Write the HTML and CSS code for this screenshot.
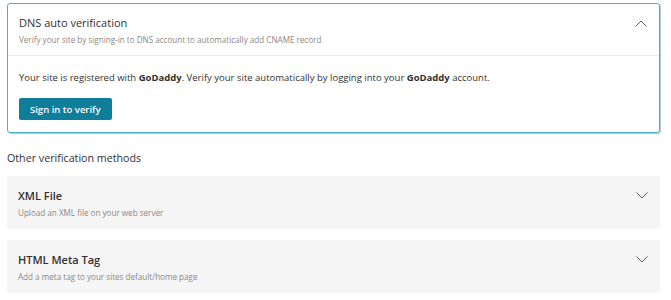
FILE: index.html
```html
<!DOCTYPE html>
<html lang="en">
<head>
  <meta charset="UTF-8" />
  <title>Site verification</title>
  <link rel="stylesheet" href="styles.css">
</head>
<body>
  <div class="page">
    <div class="panel panel-open">
      <div class="panel-head">
        <div>
          <div class="panel-title">DNS auto verification</div>
          <div class="panel-sub">Verify your site by signing-in to DNS account to automatically add CNAME record</div>
        </div>
        <svg class="chev" width="12" height="7" viewBox="0 0 12 7"><path d="M0.5 6.5 L6 1 L11.5 6.5" fill="none" stroke="#605e5c" stroke-width="1"/></svg>
      </div>
      <div class="panel-body">
        <p class="msg">Your site is registered with <b>GoDaddy</b>. Verify your site automatically by logging into your <b>GoDaddy</b> account.</p>
        <button class="btn">Sign in to verify</button>
      </div>
    </div>

    <div class="section-label">Other verification methods</div>

    <div class="panel panel-closed">
      <div class="panel-head">
        <div>
          <div class="panel-title strong">XML File</div>
          <div class="panel-sub">Upload an XML file on your web server</div>
        </div>
        <svg class="chev" width="12" height="7" viewBox="0 0 12 7"><path d="M0.5 0.5 L6 6 L11.5 0.5" fill="none" stroke="#605e5c" stroke-width="1"/></svg>
      </div>
    </div>

    <div class="panel panel-closed">
      <div class="panel-head">
        <div>
          <div class="panel-title strong">HTML Meta Tag</div>
          <div class="panel-sub">Add a meta tag to your sites default/home page</div>
        </div>
        <svg class="chev" width="12" height="7" viewBox="0 0 12 7"><path d="M0.5 0.5 L6 6 L11.5 0.5" fill="none" stroke="#605e5c" stroke-width="1"/></svg>
      </div>
    </div>
  </div>
</body>
</html>
```

FILE: styles.css
```css
body {
  margin: 0;
  font-family: 'Open Sans', 'Noto Sans', sans-serif;
  color: #323130;
  background: #fff;
}
.page {
  padding: 3px 11px 0 7px;
  display: flex;
  flex-direction: column;
}
.panel {
  border-radius: 3px;
}
.panel-open {
  border: 1px solid #4aaec5;
  box-shadow: 1px 1px 1px rgba(0, 100, 130, 0.35);
}
.panel-closed {
  background: #f5f5f5;
  margin-bottom: 11px;
}
.panel-head {
  display: flex;
  justify-content: space-between;
  align-items: flex-start;
  padding: 11px 11px 0 11px;
  height: 40px;
}
.panel-closed .panel-head {
  height: 53px;
  box-sizing: border-box;
  padding-top: 12px;
}
.panel-open .panel-head {
  border-bottom: 1px solid #edebe9;
}
.panel-title {
  font-size: 11px;
  line-height: 16px;
  color: #323130;
}
.panel-title.strong {
  font-weight: 600;
}
.panel-sub {
  font-size: 8.1px;
  line-height: 14px;
  margin-top: 2px;
  color: #8a8886;
}
.chev {
  margin-top: 5px;
  margin-right: 1px;
}
.panel-closed .chev {
  margin-top: 4px;
}
.panel-body {
  padding: 15px 11px 12px 11px;
}
.msg {
  margin: 0 0 13px 0;
  font-size: 9.5px;
  line-height: 14px;
}
.btn {
  display: block;
  background: #0f7e9b;
  color: #fff;
  border: none;
  border-radius: 2px;
  font-family: inherit;
  font-size: 9.5px;
  font-weight: 600;
  padding: 0 11px;
  height: 22px;
  cursor: pointer;
}
.section-label {
  font-size: 10.7px;
  line-height: 16px;
  margin: 17px 0 10px 0;
  color: #323130;
}
```
